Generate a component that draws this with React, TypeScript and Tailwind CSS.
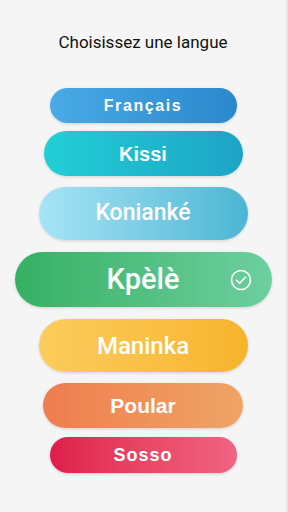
import React from "react";

const langs = [
  { name: "Français", cls: "w-[187px] h-[35px] text-[16px] tracking-[1.6px] font-bold font-['Liberation_Sans',Arial,sans-serif] bg-gradient-to-r from-[#4aaae6] to-[#2a88cc] mt-[0px]" },
  { name: "Kissi", cls: "w-[199px] h-[45px] text-[20px] font-bold font-['Liberation_Sans',Arial,sans-serif] bg-gradient-to-r from-[#22cfd6] to-[#1ea3c6] mt-[8px]" },
  { name: "Konianké", cls: "w-[209px] h-[53px] text-[23px] font-medium font-['Roboto',sans-serif] bg-gradient-to-r from-[#a6e4f7] to-[#4ab6d3] mt-[11px]" },
  { name: "Kpèlè", cls: "w-[257px] h-[55px] text-[29px] font-medium font-['Roboto',sans-serif] bg-gradient-to-r from-[#35b063] to-[#6ccf9f] mt-[12px]", selected: true },
  { name: "Maninka", cls: "w-[209px] h-[53px] text-[24px] font-medium font-['Roboto',sans-serif] bg-gradient-to-r from-[#fccc5c] to-[#f7b42a] mt-[12px]" },
  { name: "Poular", cls: "w-[200px] h-[45px] text-[21px] font-bold font-['Liberation_Sans',Arial,sans-serif] bg-gradient-to-r from-[#ef7d4f] to-[#efa466] mt-[11px]" },
  { name: "Sosso", cls: "w-[187px] h-[36px] text-[18px] tracking-[1px] font-bold font-['Liberation_Sans',Arial,sans-serif] bg-gradient-to-r from-[#df1c49] to-[#f06482] mt-[9px]" },
];

function CheckCircle() {
  return (
    <svg width="22" height="22" viewBox="0 0 22 22" fill="none" stroke="white" strokeWidth="1.6" strokeLinecap="round" strokeLinejoin="round">
      <circle cx="11" cy="11" r="9.5" />
      <path d="M6.5 11.2l3 3 6-6" />
    </svg>
  );
}

export default function App() {
  return (
    <main className="w-[288px] h-[512px] bg-[#f5f5f5] border-r-2 border-[#e6e6e6] flex flex-col items-center overflow-hidden">
      <h1 className="mt-[32px] text-[17px] text-[#111] font-['Roboto',sans-serif] leading-[20px]">
        Choisissez une langue
      </h1>

      <div className="mt-[36px] flex flex-col items-center">
        {langs.map((l) => (
          <button
            key={l.name}
            className={`relative rounded-full flex items-center justify-center text-white shadow-[0_1px_3px_rgba(0,0,0,0.15)] ${l.cls}`}
          >
            <span>{l.name}</span>
            {l.selected && (
              <span className="absolute right-[20px] top-1/2 -translate-y-1/2 flex">
                <CheckCircle />
              </span>
            )}
          </button>
        ))}
      </div>
    </main>
  );
}
